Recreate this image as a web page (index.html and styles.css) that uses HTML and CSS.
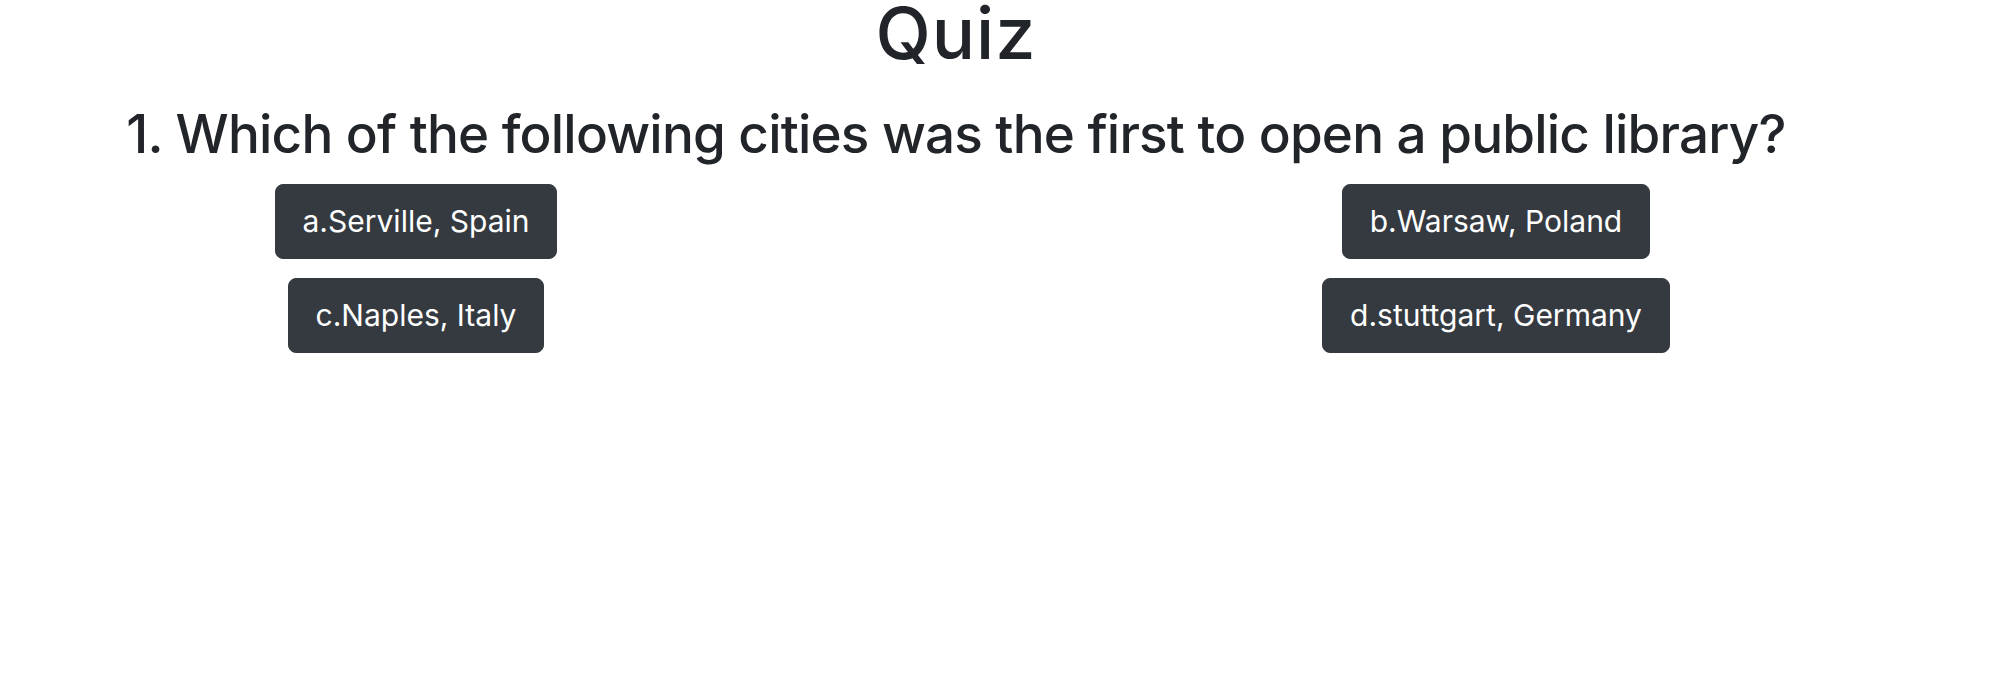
FILE: index.html
```html
<!DOCTYPE html>
<html lang="en">
<head>
<meta charset="utf-8">
<title>Quiz</title>
<link rel="stylesheet" href="styles.css">
</head>
<body>
<main class="page">
  <h1 class="title">Quiz</h1>
  <h2 class="question">1. Which of the following cities was the first to open a public library?</h2>
  <div class="answers">
    <div class="answer-cell"><button class="btn">a.Serville, Spain</button></div>
    <div class="answer-cell"><button class="btn">b.Warsaw, Poland</button></div>
    <div class="answer-cell"><button class="btn">c.Naples, Italy</button></div>
    <div class="answer-cell"><button class="btn">d.stuttgart, Germany</button></div>
  </div>
</main>
</body>
</html>
```
FILE: styles.css
```css
html, body {
  margin: 0;
  padding: 0;
  background: #ffffff;
}
body {
  font-family: Inter, "Liberation Sans", sans-serif;
  color: #212529;
}
.page {
  width: 1912px;
  display: flex;
  flex-direction: column;
  align-items: center;
}
.title {
  margin: 1px 0 0;
  font-size: 72px;
  line-height: 64px;
  letter-spacing: 1px;
  font-weight: 500;
}
.question {
  margin: 43px 0 0;
  font-size: 53px;
  line-height: 53px;
  letter-spacing: -0.8px;
  font-weight: 500;
}
.answers {
  margin-top: 23px;
  display: grid;
  grid-template-columns: 540px 540px;
  column-gap: 540px;
  row-gap: 19px;
}
.answer-cell {
  display: flex;
  justify-content: center;
}
.btn {
  font-family: inherit;
  font-size: 30px;
  line-height: 45px;
  padding: 14px 27px;
  border: 1px solid #343a40;
  border-radius: 8px;
  background: #343a40;
  color: #ffffff;
  font-weight: 400;
}
```
